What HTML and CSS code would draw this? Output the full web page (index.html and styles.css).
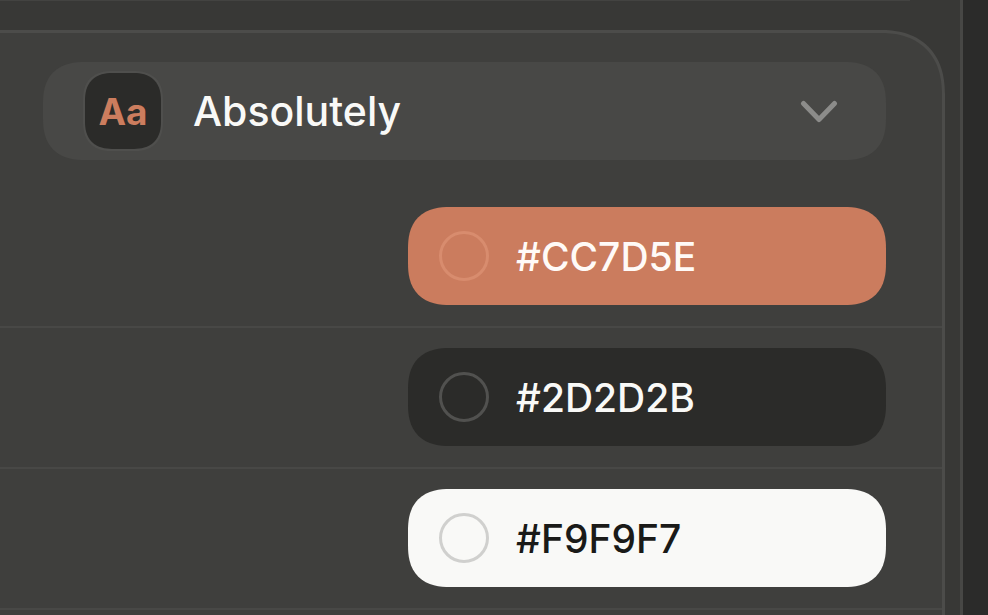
FILE: index.html
```html
<!DOCTYPE html>
<html lang="en">
<head>
<meta charset="utf-8">
<title>Appearance</title>
<link rel="stylesheet" href="styles.css">
</head>
<body>
<div class="window">
  <main class="pane">
    <div class="pane-edge"></div>
    <section class="card">
      <div class="theme">
        <div class="picker">
          <span class="badge" aria-hidden="true">Aa</span>
          <select class="picker-select" aria-label="Theme">
            <option>Absolutely</option>
          </select>
          <svg class="chevron" viewBox="0 0 38 24" aria-hidden="true"><path d="M3.500 4.500 19 20.500 34.500 4.500"/></svg>
        </div>
      </div>
      <div class="row">
        <div class="color accent">
          <button class="dot" type="button" aria-label="Pick accent"></button>
          <input class="hex" type="text" aria-label="Accent" value="#CC7D5E">
        </div>
      </div>
      <div class="row">
        <div class="color background">
          <button class="dot" type="button" aria-label="Pick background"></button>
          <input class="hex" type="text" aria-label="Background" value="#2D2D2B">
        </div>
      </div>
      <div class="row">
        <div class="color foreground">
          <button class="dot" type="button" aria-label="Pick foreground"></button>
          <input class="hex" type="text" aria-label="Foreground" value="#F9F9F7">
        </div>
      </div>
    </section>
  </main>
  <aside class="gutter"></aside>
</div>
</body>
</html>
```
FILE: styles.css
```css
* {
  box-sizing: border-box;
}

body {
  margin: 0;
  background: #2b2b2a;
  color: #f9f9f7;
  font-family: Inter, "Liberation Sans", sans-serif;
  overflow: hidden;
}

.window {
  display: flex;
  height: 100vh;
}

.pane {
  flex: 1;
  display: flex;
  flex-direction: column;
  padding-right: 15px;
  background: #383836;
  border-right: 3px solid #474745;
}

.gutter {
  width: 25px;
}

.pane-edge {
  height: 1px;
  margin: 0 35px 29px 0;
  background: #434341;
}

.card {
  flex: 1 0 auto;
  background: #3f3f3d;
  border: solid #4c4c4a;
  border-width: 3px 3px 0 0;
  border-top-right-radius: 64px;
  corner-shape: superellipse(1.2);
}

.theme {
  padding: 29px 56px 27px 43px;
}

.picker {
  display: flex;
  align-items: center;
  height: 98px;
  padding: 0 48px 0 40px;
  background: #484846;
  border-radius: 42px;
  corner-shape: superellipse(1.3);
}

.badge {
  display: flex;
  align-items: center;
  justify-content: center;
  width: 80px;
  height: 80px;
  background: #2b2b29;
  border: 2px solid #4f4f4d;
  border-radius: 30px;
  corner-shape: superellipse(1.3);
  color: #cc7d5e;
  font-size: 37px;
  font-weight: 700;
}

.picker-select {
  flex: 1;
  height: 98px;
  margin-left: 30px;
  padding: 0;
  appearance: none;
  background: none;
  border: 0;
  color: #f9f9f7;
  font: 500 41px Inter, "Liberation Sans", sans-serif;
}

.chevron {
  width: 38px;
  height: 24px;
  fill: none;
  stroke: #8c8c8a;
  stroke-width: 5;
  stroke-linecap: round;
  stroke-linejoin: round;
}

.row {
  display: flex;
  justify-content: flex-end;
  padding: 20px 56px 21px 0;
  border-bottom: 2px solid #484846;
}

.color {
  display: flex;
  align-items: center;
  gap: 27px;
  width: 478px;
  height: 98px;
  padding: 0 31px;
  border-radius: 42px;
  corner-shape: superellipse(1.3);
}

.dot {
  width: 50px;
  height: 50px;
  padding: 0;
  background: none;
  border: 3px solid;
  border-radius: 50%;
}

.hex {
  flex: 1;
  min-width: 0;
  height: 98px;
  padding: 0;
  background: none;
  border: 0;
  color: inherit;
  font: 500 39px Inter, "Liberation Sans", sans-serif;
}

.accent {
  background: #cb7c5e;
  color: #fffaf7;
}

.accent .dot {
  border-color: #d88c6e;
}

.background {
  background: #2b2b29;
  color: #f9f9f7;
}

.background .dot {
  border-color: #51514f;
}

.foreground {
  background: #f9f9f7;
  color: #1a1a18;
}

.foreground .dot {
  border-color: #d0d0ce;
}
```
